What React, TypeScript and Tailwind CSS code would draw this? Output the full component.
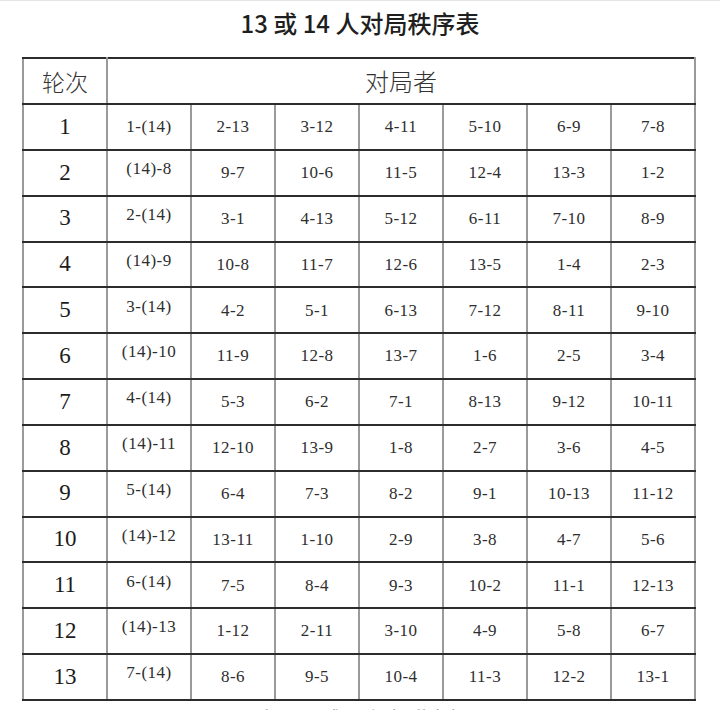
import React from "react";

const rounds: string[][] = [
  ["1-(14)", "2-13", "3-12", "4-11", "5-10", "6-9", "7-8"],
  ["(14)-8", "9-7", "10-6", "11-5", "12-4", "13-3", "1-2"],
  ["2-(14)", "3-1", "4-13", "5-12", "6-11", "7-10", "8-9"],
  ["(14)-9", "10-8", "11-7", "12-6", "13-5", "1-4", "2-3"],
  ["3-(14)", "4-2", "5-1", "6-13", "7-12", "8-11", "9-10"],
  ["(14)-10", "11-9", "12-8", "13-7", "1-6", "2-5", "3-4"],
  ["4-(14)", "5-3", "6-2", "7-1", "8-13", "9-12", "10-11"],
  ["(14)-11", "12-10", "13-9", "1-8", "2-7", "3-6", "4-5"],
  ["5-(14)", "6-4", "7-3", "8-2", "9-1", "10-13", "11-12"],
  ["(14)-12", "13-11", "1-10", "2-9", "3-8", "4-7", "5-6"],
  ["6-(14)", "7-5", "8-4", "9-3", "10-2", "11-1", "12-13"],
  ["(14)-13", "1-12", "2-11", "3-10", "4-9", "5-8", "6-7"],
  ["7-(14)", "8-6", "9-5", "10-4", "11-3", "12-2", "13-1"],
];

const cell =
  "border-x-2 border-y-2 border-x-[#9a9a9a] border-y-[#2c2c2c] text-center align-middle p-0";

export default function App() {
  return (
    <div className="w-[720px] h-[710px] overflow-hidden bg-white">
      <div className="h-px bg-[#e6e6e6]" />
      <h1 className="pt-[10px] text-center text-[24px] leading-[24px] font-medium text-[#1f1f1f] font-['Noto_Sans_CJK_SC','Noto_Sans',sans-serif]">
        13 或 14 人对局秩序表
      </h1>

      <table className="mt-[22px] ml-[22px] w-[672px] table-fixed border-collapse">
        <colgroup>
          <col className="w-[84px]" />
          {Array.from({ length: 7 }).map((_, i) => (
            <col key={i} className="w-[84px]" />
          ))}
        </colgroup>
        <thead>
          <tr className="h-[46px]">
            <th className={`${cell} font-light text-[23px] text-[#333] font-['Noto_Sans_CJK_SC',sans-serif]`}>
              轮次
            </th>
            <th
              colSpan={7}
              className={`${cell} font-light text-[24px] text-[#333] font-['Noto_Sans_CJK_SC',sans-serif]`}
            >
              对局者
            </th>
          </tr>
        </thead>
        <tbody className="font-['Liberation_Serif','Times_New_Roman',serif]">
          {rounds.map((pairs, r) => (
            <tr key={r} className="h-[45.85px]">
              <td className={`${cell} text-[23px] text-[#1c1c1c]`}>{r + 1}</td>
              {pairs.map((p, c) => (
                <td
                  key={c}
                  className={`${cell} text-[17px] tracking-[0.5px] text-[#2e2e2e] ${
                    c === 0 && r > 0 ? "pb-[8px]" : ""
                  }`}
                >
                  {p}
                </td>
              ))}
            </tr>
          ))}
        </tbody>
      </table>

      <p className="mt-[3px] text-center text-[16px] text-[#777] font-['Noto_Sans_CJK_SC',sans-serif]">
        表 2　13 或 14 人对局秩序表
      </p>
    </div>
  );
}
